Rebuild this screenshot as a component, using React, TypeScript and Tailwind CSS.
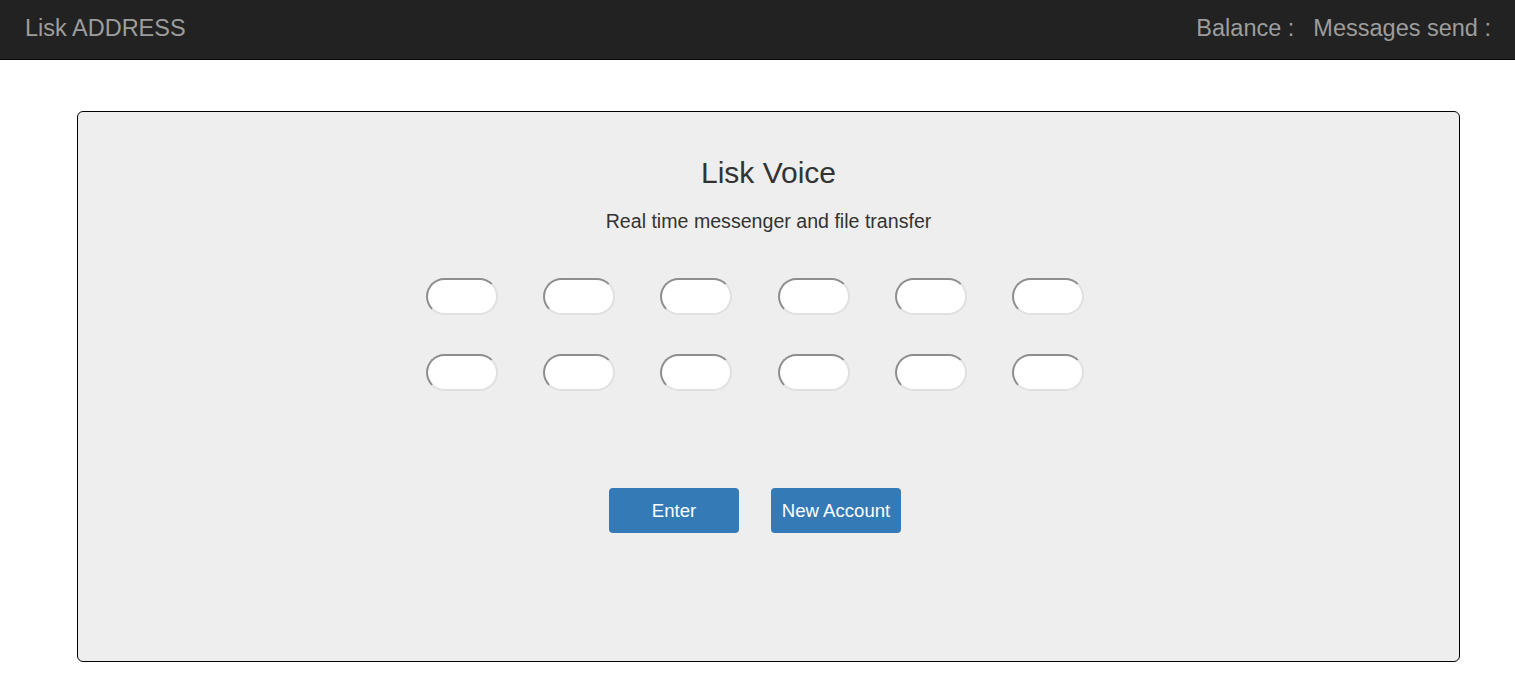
import React from "react";

const font = { fontFamily: '"Liberation Sans", Arial, sans-serif' };

function WordInput() {
  return (
    <input
      type="text"
      className="h-[37px] w-[72px] rounded-full border-2 border-t-[#8d8d8d] border-l-[#8d8d8d] border-r-[#e0e0e0] border-b-[#e0e0e0] bg-white px-3 outline-none"
    />
  );
}

export default function App() {
  const rows = [0, 1];
  const cols = [0, 1, 2, 3, 4, 5];

  return (
    <div className="min-h-screen bg-white" style={font}>
      <nav className="flex h-[60px] items-center justify-between border-b border-[#080808] bg-[#222222] pb-[2px] pl-[25px] pr-[24px] text-[23.5px] text-[#9d9d9d]">
        <span>Lisk ADDRESS</span>
        <div className="flex gap-[19px]">
          <span>Balance :</span>
          <span>Messages send :</span>
        </div>
      </nav>

      <section className="ml-[77px] mt-[51px] h-[551px] w-[1383px] rounded-[6px] border border-black bg-[#eeeeee] pt-[44px]">
        <h2 className="text-center text-[30px] leading-[33px] text-[#333333]">Lisk Voice</h2>
        <p className="mt-[19px] text-center text-[19.6px] leading-[26px] text-[#333333]">
          Real time messenger and file transfer
        </p>

        <div className="mt-[44px] flex flex-col items-center gap-[39px] pr-[27px]">
          {rows.map((r) => (
            <div key={r} className="flex gap-[45.4px]">
              {cols.map((c) => (
                <WordInput key={c} />
              ))}
            </div>
          ))}
        </div>

        <div className="mt-[97px] flex justify-center gap-[32px] pr-[27px]">
          <button className="h-[45px] w-[130px] rounded-[4px] bg-[#337ab7] text-[18.6px] text-white">Enter</button>
          <button className="h-[45px] w-[130px] rounded-[4px] bg-[#337ab7] text-[18.6px] text-white">New Account</button>
        </div>
      </section>
    </div>
  );
}
